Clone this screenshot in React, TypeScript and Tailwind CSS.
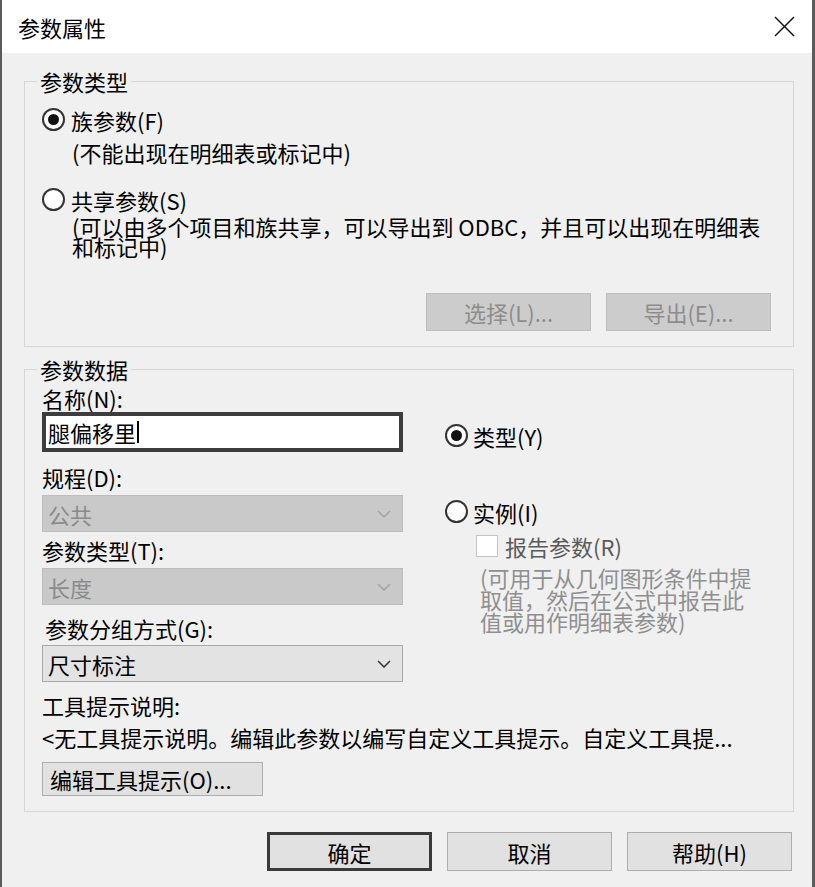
import React from 'react';

const font = "font-['Noto_Sans_CJK_SC','Noto_Sans',sans-serif]";

function Radio({ checked }: { checked?: boolean }) {
  return (
    <span className="flex h-[23px] w-[23px] shrink-0 items-center justify-center rounded-full border-2 border-[#333] bg-white">
      {checked ? <span className="block h-[11px] w-[11px] rounded-full bg-[#111]" /> : null}
    </span>
  );
}

function Chevron({ color }: { color: string }) {
  return (
    <svg width="14" height="8" viewBox="0 0 14 8" fill="none" stroke={color} strokeWidth="1.5">
      <polyline points="1,1 7,7 13,1" />
    </svg>
  );
}

function Select({ value, disabled }: { value: string; disabled?: boolean }) {
  return (
    <div
      className={`flex h-[37px] w-[361px] items-center justify-between border pl-[5px] pr-[11px] ${
        disabled ? 'border-[#bdbdbd] bg-[#c9c9c9] text-[#8a8a8a]' : 'border-[#a8a8a8] bg-[#e3e3e3] text-black'
      }`}
    >
      <span>{value}</span>
      <Chevron color={disabled ? '#a3a3a3' : '#333'} />
    </div>
  );
}

export default function App() {
  return (
    <div
      className={`flex h-[887px] w-[815px] flex-col border-l-2 border-r-[3px] border-[#5c5c5c] bg-[#f0f0f0] text-[22px] leading-[22px] text-black ${font}`}
    >
      <div className="flex h-[53px] items-center justify-between bg-white pl-[16px] pr-[17px]">
        <span>参数属性</span>
        <svg width="21" height="21" viewBox="0 0 21 21" stroke="#111" strokeWidth="1.5">
          <line x1="1" y1="1" x2="20" y2="20" />
          <line x1="20" y1="1" x2="1" y2="20" />
        </svg>
      </div>

      <fieldset className="ml-[22px] mr-[18px] mt-[17px] border border-[#d6d6d6] pb-[15px] pl-[12px] pr-[22px]">
        <legend className="px-[3px]">参数类型</legend>
        <div className="ml-[5px] mt-[16px] flex items-center gap-[6px]">
          <Radio checked />
          <span>族参数(F)</span>
        </div>
        <div className="ml-[35px] mt-[10px]">(不能出现在明细表或标记中)</div>
        <div className="ml-[5px] mt-[25px] flex items-center gap-[6px]">
          <Radio />
          <span>共享参数(S)</span>
        </div>
        <div className="ml-[35px] mt-[5px] leading-[20px]">
          <div className="whitespace-nowrap">(可以由多个项目和族共享，可以导出到 ODBC，并且可以出现在明细表</div>
          <div>和标记中)</div>
        </div>
        <div className="mt-[37px] flex justify-end gap-[15px]">
          <div className="flex h-[38px] w-[165px] items-center justify-center border border-[#bdbdbd] bg-[#cccccc] text-[#8c8c8c]">
            选择(L)...
          </div>
          <div className="flex h-[38px] w-[165px] items-center justify-center border border-[#bdbdbd] bg-[#cccccc] text-[#8c8c8c]">
            导出(E)...
          </div>
        </div>
      </fieldset>

      <fieldset className="ml-[22px] mr-[18px] mt-[11px] border border-[#d6d6d6] pb-[15px] pl-[12px]">
        <legend className="px-[3px]">参数数据</legend>
        <div className="flex">
          <div className="ml-[5px] w-[361px]">
            <div className="mt-[7px]">名称(N):</div>
            <div className="mt-[3px] flex h-[40px] items-center border-4 border-[#3d3d3d] bg-white pl-[2px]">
              <span>腿偏移里</span>
              <span className="ml-[1px] block h-[22px] w-[2px] bg-black" />
            </div>
            <div className="mt-[14px]">规程(D):</div>
            <div className="mt-[7px]">
              <Select value="公共" disabled />
            </div>
            <div className="mt-[7px]">参数类型(T):</div>
            <div className="mt-[7px]">
              <Select value="长度" disabled />
            </div>
            <div className="ml-[3px] mt-[12px]">参数分组方式(G):</div>
            <div className="mt-[6px]">
              <Select value="尺寸标注" />
            </div>
          </div>

          <div className="ml-[42px]">
            <div className="mt-[44px] flex items-center gap-[5px]">
              <Radio checked />
              <span>类型(Y)</span>
            </div>
            <div className="mt-[53px] flex items-center gap-[5px]">
              <Radio />
              <span>实例(I)</span>
            </div>
            <div className="ml-[31px] mt-[12px] flex items-center gap-[7px] text-[#5a5a5a]">
              <span className="block h-[22px] w-[22px] border border-[#c4c4c4] bg-white" />
              <span>报告参数(R)</span>
            </div>
            <div className="ml-[35px] mt-[9px] text-[#8f8f8f]">
              <div>(可用于从几何图形条件中提</div>
              <div>取值，然后在公式中报告此</div>
              <div>值或用作明细表参数)</div>
            </div>
          </div>
        </div>

        <div className="ml-[5px] mt-[12px]">工具提示说明:</div>
        <div className="ml-[5px] mt-[10px] whitespace-nowrap">
          &lt;无工具提示说明。编辑此参数以编写自定义工具提示。自定义工具提...
        </div>
        <div className="ml-[5px] mt-[14px] flex h-[34px] w-[221px] items-center border border-[#adadad] bg-[#e1e1e1] pl-[7px]">
          编辑工具提示(O)...
        </div>
      </fieldset>

      <div className="mt-[20px] flex justify-end gap-[15px] pr-[20px]">
        <div className="flex h-[39px] w-[165px] items-center justify-center border-[3px] border-[#3a3a3a] bg-[#e1e1e1]">
          确定
        </div>
        <div className="flex h-[39px] w-[165px] items-center justify-center border border-[#adadad] bg-[#e1e1e1]">
          取消
        </div>
        <div className="flex h-[39px] w-[165px] items-center justify-center border border-[#adadad] bg-[#e1e1e1]">
          帮助(H)
        </div>
      </div>
    </div>
  );
}
